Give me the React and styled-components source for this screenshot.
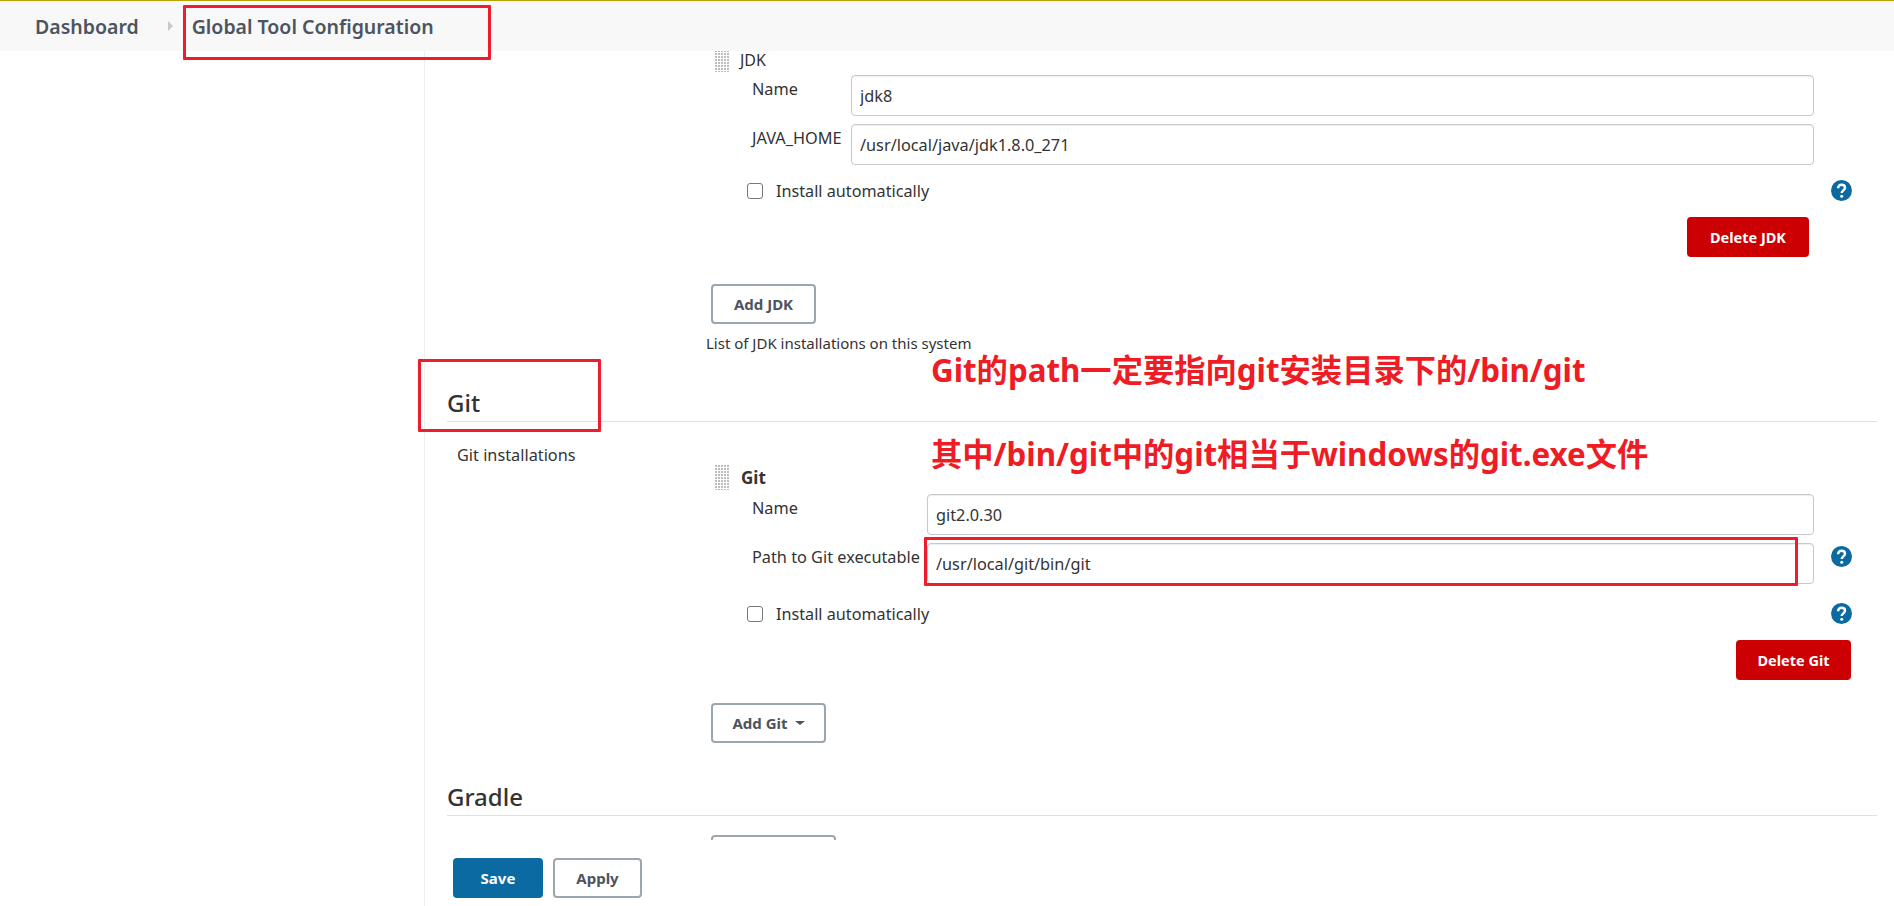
import React from "react";
import styled, { createGlobalStyle } from "styled-components";

const GlobalStyle = createGlobalStyle`
  html, body {
    margin: 0;
    padding: 0;
    background: #fff;
    overflow: hidden;
  }
  body {
    font-family: "Noto Sans", "Open Sans", sans-serif;
    color: #333;
  }
  * {
    box-sizing: border-box;
  }
`;

export default function App() {
  return (
    <Page>
      <GlobalStyle />
      <Breadcrumbs>
        <Crumb>Dashboard</Crumb>
        <CrumbArrow />
        <Crumb>Global Tool Configuration</Crumb>
      </Breadcrumbs>

      <Main>
        <Sidebar />
        <Content>
          <Scroller>
            <SectionRow $offset={-4}>
              <RowLabel />
              <div>
                <Installation
                  title="JDK"
                  labelWidth={99}
                  fieldsTop={3}
                  fields={[
                    { label: "Name", value: "jdk8" },
                    { label: "JAVA_HOME", value: "/usr/local/java/jdk1.8.0_271" },
                  ]}
                  checkTop={15}
                  deleteLabel="Delete JDK"
                  deleteWidth={122}
                  deleteRight={68}
                />
                <AddButton $top={27} $width={105}>Add JDK</AddButton>
                <HelpText>List of JDK installations on this system</HelpText>
              </div>
            </SectionRow>

            <SectionTitle $top={34}>Git</SectionTitle>
            <SectionRow $offset={43}>
              <RowLabel>Git installations</RowLabel>
              <div>
                <Installation
                  title="Git"
                  bold
                  labelWidth={175}
                  fieldsTop={4}
                  fields={[
                    { label: "Name", value: "git2.0.30" },
                    { label: "Path to Git executable", value: "/usr/local/git/bin/git", help: true },
                  ]}
                  checkTop={19}
                  deleteLabel="Delete Git"
                  deleteWidth={115}
                  deleteRight={26}
                />
                <AddButton $top={23} $width={115}>
                  Add Git <Caret />
                </AddButton>
              </div>
            </SectionRow>

            <SectionTitle $top={38}>Gradle</SectionTitle>
            <SectionRow $offset={19}>
              <RowLabel />
              {/* only the top edge of this button is above the bottom bar */}
              <AddButton $top={0} $width={125} aria-label="Add Gradle" />
            </SectionRow>
          </Scroller>

          <BottomBar>
            <SaveButton>Save</SaveButton>
            <ApplyButton>Apply</ApplyButton>
          </BottomBar>
        </Content>
      </Main>

      <RedBox $x={183} $y={4} $w={308} $h={55} />
      <RedBox $x={418} $y={358} $w={183} $h={73} />
      <RedBox $x={924} $y={536} $w={874} $h={49} />
      <Note $y={349}>Git的path一定要指向git安装目录下的/bin/git</Note>
      <Note $y={433}>其中/bin/git中的git相当于windows的git.exe文件</Note>
    </Page>
  );
}

function Installation({ title, bold, labelWidth, fieldsTop, fields, checkTop, deleteLabel, deleteWidth, deleteRight }) {
  return (
    <>
      <BlockHeader>
        <Grip />
        <BlockTitle $bold={bold}>{title}</BlockTitle>
      </BlockHeader>
      <Fields $top={fieldsTop}>
        {fields.map((f) => (
          <FieldRow key={f.label}>
            <FieldLabel $width={labelWidth}>{f.label}</FieldLabel>
            <TextInput readOnly defaultValue={f.value} />
            <HelpSlot>{f.help && <HelpIcon />}</HelpSlot>
          </FieldRow>
        ))}
      </Fields>
      <CheckRow $top={checkTop}>
        <CheckLabel>
          <CheckBox type="checkbox" />
          Install automatically
        </CheckLabel>
        <HelpIcon />
      </CheckRow>
      <DeleteRow $right={deleteRight}>
        <DeleteButton $width={deleteWidth}>{deleteLabel}</DeleteButton>
      </DeleteRow>
    </>
  );
}

function HelpIcon() {
  return (
    <HelpSvg viewBox="0 0 21 21">
      <circle cx="10.5" cy="10.5" r="10.5" fill="#0b6aa2" />
      <path
        d="M7.1 8.3c0-2.2 1.5-3.6 3.5-3.6s3.4 1.3 3.4 3c0 2.5-3.3 2.8-3.3 5.2"
        fill="none"
        stroke="#fff"
        strokeWidth="2.4"
      />
      <circle cx="10.7" cy="16.2" r="1.5" fill="#fff" />
    </HelpSvg>
  );
}

const Page = styled.div`
  position: relative;
  width: 1894px;
  height: 906px;
  border-top: 1px solid #b8a200;
  overflow: hidden;
`;

const Breadcrumbs = styled.div`
  display: flex;
  align-items: center;
  height: 50px;
  padding: 0 0 0 35px;
  background: #f8f8f8;
`;

const Crumb = styled.span`
  font-size: 19.5px;
  font-weight: 600;
  color: #4d545d;
`;

const CrumbArrow = styled.span`
  width: 0;
  height: 0;
  margin: 0 19px 0 29px;
  border-left: 5px solid #c8c8c8;
  border-top: 5px solid transparent;
  border-bottom: 5px solid transparent;
`;

const Main = styled.div`
  display: flex;
  height: 855px;
`;

const Sidebar = styled.div`
  width: 425px;
  flex: none;
  border-right: 1px solid #eee;
`;

const Content = styled.div`
  flex: 1;
  display: flex;
  flex-direction: column;
  min-width: 0;
`;

const Scroller = styled.div`
  height: 789px;
  padding: 0 17px 0 22px;
  overflow: hidden;
`;

const SectionTitle = styled.h2`
  margin: ${(p) => p.$top}px 0 0;
  padding-bottom: 2px;
  border-bottom: 1px solid #e0e0e0;
  font-size: 24px;
  font-weight: 500;
  line-height: 32px;
  color: #333;
`;

const SectionRow = styled.div`
  display: grid;
  grid-template-columns: 264px 1fr;
  margin-top: ${(p) => p.$offset}px;
`;

const RowLabel = styled.div`
  padding-left: 10px;
  margin-top: -20px;
  font-size: 16.3px;
  line-height: 20px;
`;

const BlockHeader = styled.div`
  display: flex;
  align-items: center;
  gap: 10px;
  height: 25px;
  padding-left: 4px;
`;

const Grip = styled.span`
  width: 14px;
  height: 25px;
  background-image: radial-gradient(circle at 1px 1px, #bdbdbd 1px, transparent 1.3px);
  background-size: 3px 3px;
`;

const BlockTitle = styled.span`
  font-size: ${(p) => (p.$bold ? 17 : 16)}px;
  line-height: 14px;
  font-weight: ${(p) => (p.$bold ? 700 : 400)};
  color: #333;
  margin-left: ${(p) => (p.$bold ? 2 : 1)}px;
`;

const Fields = styled.div`
  display: flex;
  flex-direction: column;
  gap: 8px;
  margin-top: ${(p) => p.$top}px;
`;

const FieldRow = styled.div`
  display: flex;
  align-items: flex-start;
  padding-left: 41px;
`;

const FieldLabel = styled.label`
  flex: none;
  width: ${(p) => p.$width}px;
  padding-top: 4px;
  font-size: 16.3px;
  line-height: 20px;
  white-space: nowrap;
`;

const TextInput = styled.input`
  flex: 1;
  min-width: 0;
  height: 41px;
  padding: 1px 8px 0;
  border: 1px solid #c8c8c8;
  border-radius: 4px;
  box-shadow: inset 0 1px 1px rgba(0, 0, 0, 0.07);
  background: #fff;
  color: #333;
  font-family: inherit;
  font-size: 16.3px;
  outline: none;
`;

const HelpSlot = styled.div`
  flex: none;
  width: 63px;
  padding: 3px 0 0 17px;
`;

const HelpSvg = styled.svg`
  display: block;
  width: 21px;
  height: 21px;
  flex: none;
`;

const CheckRow = styled.div`
  display: flex;
  align-items: center;
  justify-content: space-between;
  height: 21px;
  margin-top: ${(p) => p.$top}px;
  padding: 0 25px 0 36px;
`;

const CheckLabel = styled.label`
  display: flex;
  align-items: center;
  gap: 13px;
  font-size: 16.2px;
`;

const CheckBox = styled.input`
  appearance: none;
  width: 16px;
  height: 16px;
  margin: 0;
  border: 1px solid #777;
  border-radius: 3px;
  background: #fff;
`;

const DeleteRow = styled.div`
  display: flex;
  justify-content: flex-end;
  margin-top: 16px;
  padding-right: ${(p) => p.$right}px;
`;

const BaseButton = styled.button`
  height: 40px;
  padding: 0;
  border-radius: 4px;
  font-family: inherit;
  font-size: 15px;
  font-weight: 700;
`;

const DeleteButton = styled(BaseButton)`
  width: ${(p) => p.$width}px;
  border: none;
  background: #cc0003;
  color: #fff;
  font-size: 14.5px;
`;

const AddButton = styled(BaseButton)`
  display: flex;
  align-items: center;
  justify-content: center;
  gap: 7px;
  width: ${(p) => p.$width}px;
  margin-top: ${(p) => p.$top}px;
  border: 2px solid #9aa7b0;
  background: #fff;
  color: #4d545d;
`;

const Caret = styled.span`
  width: 0;
  height: 0;
  border-top: 4px solid #4d545d;
  border-left: 5px solid transparent;
  border-right: 5px solid transparent;
`;

const HelpText = styled.div`
  margin: 9px 0 0 -5px;
  font-size: 15px;
  line-height: 20px;
  color: #333;
`;

const BottomBar = styled.div`
  display: flex;
  gap: 10px;
  padding: 18px 0 0 28px;
`;

const SaveButton = styled(BaseButton)`
  width: 90px;
  border: none;
  background: #0b6aa2;
  color: #fff;
`;

const ApplyButton = styled(BaseButton)`
  width: 89px;
  border: 2px solid #9aa7b0;
  background: #fff;
  color: #4d545d;
`;

const RedBox = styled.div`
  position: absolute;
  left: ${(p) => p.$x}px;
  top: ${(p) => p.$y}px;
  width: ${(p) => p.$w}px;
  height: ${(p) => p.$h}px;
  border: 3px solid #ed1c2e;
  border-radius: 1px;
  pointer-events: none;
`;

const Note = styled.div`
  position: absolute;
  left: 931px;
  top: ${(p) => p.$y}px;
  font-family: "Noto Sans", "Noto Sans CJK SC", sans-serif;
  font-size: 31.3px;
  font-weight: 700;
  line-height: 40px;
  color: #ee1c25;
  white-space: nowrap;
`;
